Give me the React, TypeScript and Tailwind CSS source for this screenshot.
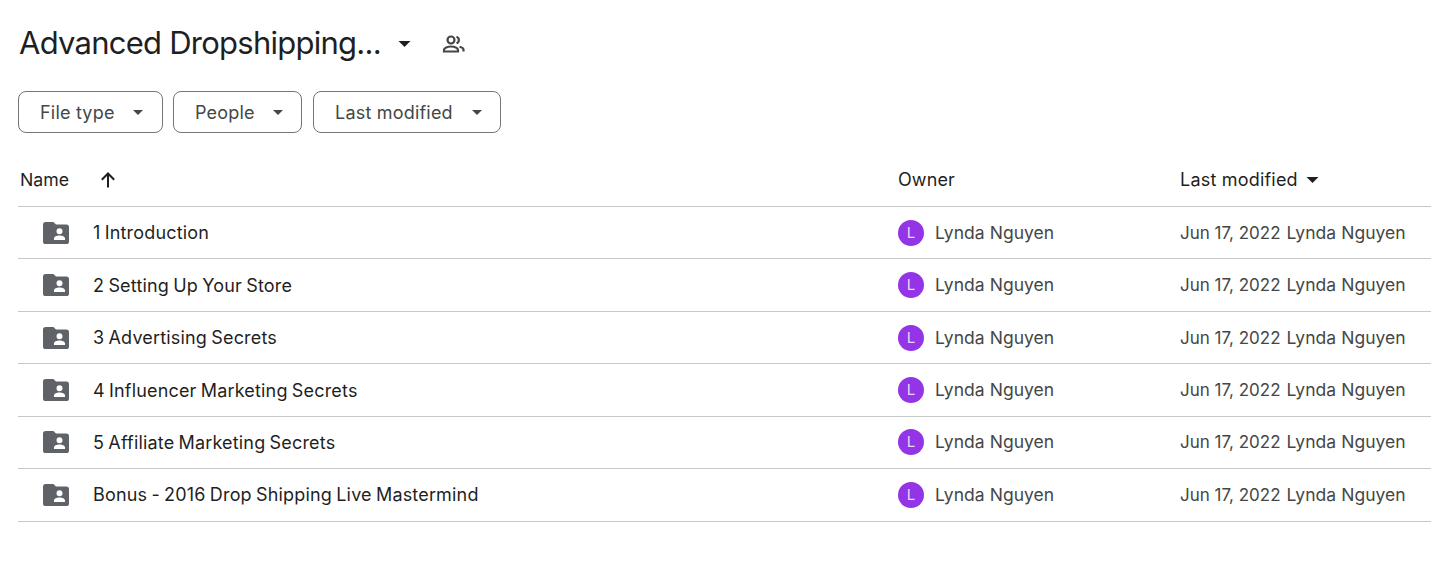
import React from "react";

const font = "font-['Inter','Roboto',sans-serif]";

function Caret({ className = "" }: { className?: string }) {
  return (
    <svg viewBox="0 0 10 5" className={className} aria-hidden="true">
      <path d="M0 0h10L5 5z" fill="currentColor" />
    </svg>
  );
}

function Chip({ label, className, gap }: { label: string; className: string; gap: string }) {
  return (
    <button className={`flex h-[42px] items-center rounded-lg border border-[#747775] pl-[21px] text-[#444746] ${className}`}>
      <span className="pt-[1px] text-[18px] leading-6 tracking-[0.2px]">{label}</span>
      <Caret className={`h-[5px] w-[10px] ${gap}`} />
    </button>
  );
}

function FolderIcon() {
  return (
    <svg viewBox="0 0 26 22" className="h-[22px] w-[26px] text-[#5f6368]" aria-hidden="true">
      <path
        fill="currentColor"
        fillRule="evenodd"
        d="M2.6 0h7.8l2.6 2.6h10.4A2.6 2.6 0 0 1 26 5.2v14.2a2.6 2.6 0 0 1-2.6 2.6H2.6A2.6 2.6 0 0 1 0 19.4V2.6A2.6 2.6 0 0 1 2.6 0zM19.500 9.300a3 3 0 1 1-6 0a3 3 0 1 1 6 0zM16.500 13.600c-2.900 0-5.500 1.200-5.500 2.700V18h11v-1.700c0-1.500-2.600-2.700-5.500-2.700z"
      />
    </svg>
  );
}

const rows = [
  "1 Introduction",
  "2 Setting Up Your Store",
  "3 Advertising Secrets",
  "4 Influencer Marketing Secrets",
  "5 Affiliate Marketing Secrets",
  "Bonus - 2016 Drop Shipping Live Mastermind",
];

export default function App() {
  return (
    <div className={`${font} min-h-[575px] w-[1431px] overflow-hidden bg-white pl-[18px]`}>
      <div className="flex h-[87px] items-center pt-[1px]">
        <h1 className="pb-[2px] pl-[1px] text-[31px] leading-10 font-normal tracking-[-0.75px] text-[#1f1f1f]">Advanced Dropshipping...</h1>
        <Caret className="ml-[17px] h-[6px] w-[13px] text-[#1f1f1f]" />
        <svg viewBox="0 0 24 24" className="ml-[31px] h-6 w-6 text-[#444746]" fill="none" stroke="currentColor" strokeWidth="2.2" aria-hidden="true">
          <circle cx="9" cy="8" r="3.500" />
          <path d="M2 19.500v-1.800c0-1.900 3.500-3.200 7-3.200s7 1.300 7 3.200v1.800z" />
          <path d="M14.500 4.700a3.500 3.500 0 0 1 0 6.600M17.500 14.800c2.300.5 4 1.500 4 2.900v1.800" />
        </svg>
      </div>
      <div className="mt-[4px] flex">
        <Chip label="File type" className="w-[145px]" gap="ml-[18px]" />
        <Chip label="People" className="ml-[10px] w-[129px]" gap="ml-[18px]" />
        <Chip label="Last modified" className="ml-[11px] w-[188px]" gap="ml-[19px]" />
      </div>
      <div className="mt-[20px] flex h-[54px] items-center border-b border-[#c7c7c7] text-[18px] leading-[26px] text-[#1f1f1f]">
        <div className="flex w-[880px] items-center pl-[2px]">
          <span className="text-[17.7px]">Name</span>
          <svg viewBox="0 0 18 18" className="ml-[30px] h-[18px] w-[18px]" fill="none" stroke="currentColor" strokeWidth="2" aria-hidden="true">
            <path d="M9 16.500V2.500M2.800 8.700 9 2.500l6.200 6.200" />
          </svg>
        </div>
        <div className="w-[282px] tracking-[0.1px]">Owner</div>
        <div className="flex items-center">
          <span className="tracking-[0.2px]">Last modified</span>
          <Caret className="ml-[8px] h-[6px] w-[13px]" />
        </div>
      </div>
      {rows.map((r) => (
        <div key={r} className="flex h-[52.45px] items-center border-b border-[#c7c7c7] text-[17.5px] leading-[26px]">
          <div className="flex w-[880px] items-center">
            <span className="ml-[25px]"><FolderIcon /></span>
            <span className="ml-[24px] pt-[1px] text-[18px] tracking-[0.17px] [word-spacing:-1px] text-[#1f1f1f]">{r}</span>
          </div>
          <div className="flex w-[282px] items-center text-[#444746]">
            <span className="flex h-[26px] w-[26px] items-center justify-center rounded-full bg-[#9334e6] text-[15px] text-[#e8d8fb]">L</span>
            <span className="ml-[11px] tracking-[0.05px]">Lynda Nguyen</span>
          </div>
          <div className="flex items-center text-[#444746]">
            <span className="text-[17px]">Jun 17, 2022</span>
            <span className="ml-[6px] tracking-[0.05px]">Lynda Nguyen</span>
          </div>
        </div>
      ))}
    </div>
  );
}
